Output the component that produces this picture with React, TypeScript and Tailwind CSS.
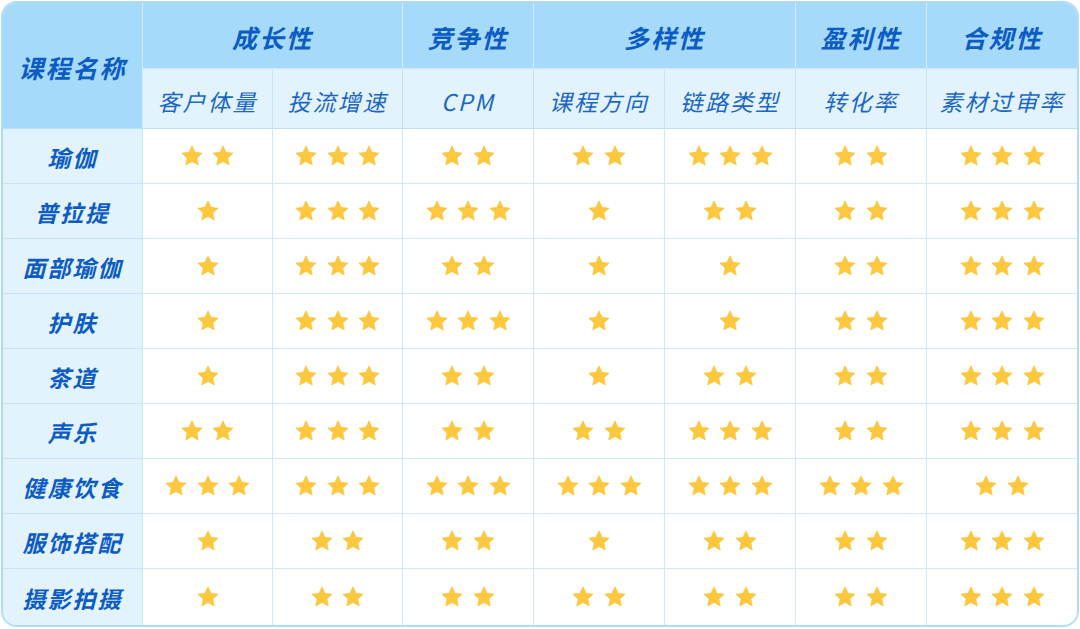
import React from "react";

const rows: [string, number[]][] = [
  ["瑜伽", [2, 3, 2, 2, 3, 2, 3]],
  ["普拉提", [1, 3, 3, 1, 2, 2, 3]],
  ["面部瑜伽", [1, 3, 2, 1, 1, 2, 3]],
  ["护肤", [1, 3, 3, 1, 1, 2, 3]],
  ["茶道", [1, 3, 2, 1, 2, 2, 3]],
  ["声乐", [2, 3, 2, 2, 3, 2, 3]],
  ["健康饮食", [3, 3, 3, 3, 3, 3, 2]],
  ["服饰搭配", [1, 2, 2, 1, 2, 2, 3]],
  ["摄影拍摄", [1, 2, 2, 2, 2, 2, 3]],
];

const subs = ["客户体量", "投流增速", "CPM", "课程方向", "链路类型", "转化率", "素材过审率"];

function Star() {
  return (
    <svg width="24" height="24" viewBox="0 0 24 24" className="block">
      <path
        d="M12 1.8l3.05 6.5 7.05.85-5.2 4.85 1.35 7-6.25-3.5-6.25 3.5 1.35-7-5.2-4.85 7.05-.85z"
        fill="#fdc83e"
        stroke="#f8bf35"
        strokeWidth="0.6"
        strokeLinejoin="round"
      />
    </svg>
  );
}

function Stars({ n }: { n: number }) {
  return (
    <div className="flex items-center justify-center gap-[7.5px]">
      {Array.from({ length: n }).map((_, i) => (
        <Star key={i} />
      ))}
    </div>
  );
}

const font = { fontFamily: '"Noto Sans CJK SC", "Noto Sans", sans-serif' };

export default function App() {
  return (
    <div className="w-[1080px] h-[629px] bg-white p-[1px]" style={font}>
      <div className="rounded-[16px] border-2 border-[#aedcf8] overflow-hidden bg-white">
        <div className="grid grid-cols-[140px_130px_130px_131px_131px_131px_131px_1fr] grid-rows-[66px_60px_repeat(8,55px)_56px]">
          <div className="row-span-2 flex items-center justify-center bg-[#a6dafb] border-r border-[#d3ecfc] border-b border-b-[#b9e0f8]">
            <span className="text-[25px] font-bold italic tracking-[2px] text-[#0c5cc3] pt-[4px]">课程名称</span>
          </div>
          {[
            ["成长性", "col-span-2"],
            ["竞争性", "col-span-1"],
            ["多样性", "col-span-2"],
            ["盈利性", "col-span-1"],
            ["合规性", "col-span-1"],
          ].map(([t, c], i) => (
            <div
              key={t}
              className={`${c} flex items-center justify-center bg-[#a6dafb] border-b border-[#c9e8fc] ${i < 4 ? "border-r border-r-[#d3ecfc]" : ""}`}
            >
              <span className="text-[25px] font-bold italic tracking-[2px] text-[#0c5cc3] pt-[5px]">{t}</span>
            </div>
          ))}
          {subs.map((s, i) => (
            <div
              key={s}
              className={`flex items-center justify-center bg-[#e3f3fe] border-b border-[#b9e0f8] ${i < 6 ? "border-r border-r-[#c3e4f9]" : ""}`}
            >
              <span className="text-[23px] font-normal italic tracking-[2px] text-[#1b67c3] pt-[5px]">{s}</span>
            </div>
          ))}
          {rows.map(([name, vals], r) => (
            <React.Fragment key={name}>
              <div
                className={`flex items-center justify-center bg-[#e3f3fe] border-r border-[#c3e4f9] ${r < 8 ? "border-b border-b-[#c3e4f9]" : ""}`}
              >
                <span className="text-[23px] font-bold italic tracking-[2px] text-[#0c5cc3] pt-[2px]">{name}</span>
              </div>
              {vals.map((v, i) => (
                <div
                  key={i}
                  className={`flex items-center justify-center bg-white ${i < 6 ? "border-r border-[#cfe9fa]" : ""} ${r < 8 ? "border-b border-b-[#cfe9fa]" : ""}`}
                >
                  <Stars n={v} />
                </div>
              ))}
            </React.Fragment>
          ))}
        </div>
      </div>
    </div>
  );
}
